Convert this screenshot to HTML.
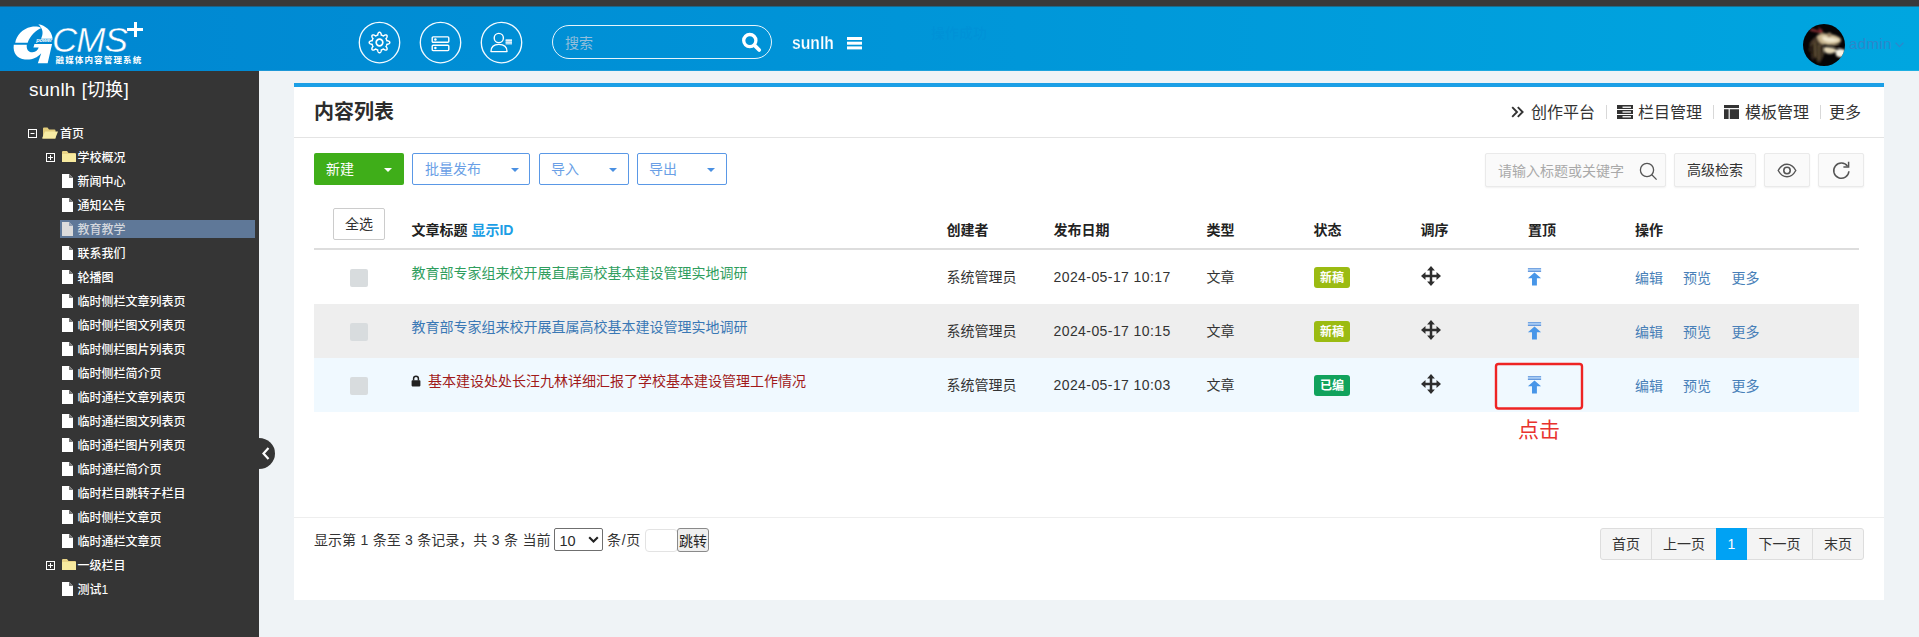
<!DOCTYPE html>
<html lang="zh-CN">
<head>
<meta charset="utf-8">
<title>内容列表</title>
<style>
*{box-sizing:border-box;margin:0;padding:0}
html,body{width:1919px;height:637px;overflow:hidden}
body{position:relative;background:#eff3f6;font-family:"Liberation Sans","Noto Sans CJK SC",sans-serif;font-size:14px;color:#333}
.abs{position:absolute}
.t{position:absolute;white-space:nowrap;line-height:1}
/* top */
#topbar{left:0;top:0;width:1919px;height:6px;background:#393939}
#header{left:0;top:6px;width:1919px;height:65px;background:linear-gradient(90deg,#0086d1 0%,#00a6e0 100%)}
.circ{width:41px;height:41px;border:1px solid #eaf7ff;border-radius:50%;box-shadow:0 0 .6px rgba(255,255,255,.7),inset 0 0 .6px rgba(255,255,255,.7)}
#hsearch{left:552px;top:25px;width:220px;height:34px;border:1px solid rgba(255,255,255,.9);border-radius:17px}
/* sidebar */
#side{left:0;top:71px;width:259px;height:566px;background:#353535}
.tree{color:#fff;font-size:12px;font-weight:500}
.tree .t{line-height:14px;margin-top:1px}
/* panel */
#panel{left:294px;top:83px;width:1590px;height:517px;background:#fff;border-top:4px solid #1b9fe6}
.btn-o{border:1px solid #5a98e6;border-radius:2px;background:#fff;height:32px}
.btn-o .t{color:#6a9fe6;font-size:14px;top:8px}
.caret{width:0;height:0;border-left:4px solid transparent;border-right:4px solid transparent;border-top:4px solid #4a90e2}
.tool{height:34px;top:153px;background:#fafafa;border:1px solid #eaeaea;border-radius:2px;box-shadow:0 1px 2px rgba(0,0,0,.06)}
.th{font-weight:bold;font-size:14px;color:#222}
.cb{width:18px;height:18px;background:#d8dcde;border-radius:2px}
.lnk{color:#487fb8;font-size:14px}
.badge{width:36px;height:21px;border-radius:3px;color:#fff;font-size:12px;font-weight:bold;text-align:center;line-height:22.5px}
.pg{top:528px;height:32px;background:#f4f4f4;border:1px solid #ddd;font-size:14px;color:#333;text-align:center;line-height:30px}
</style>
</head>
<body>
<div id="topbar" class="abs"></div>
<div id="header" class="abs"></div>
<div class="abs" style="left:0;top:6px;width:1919px;height:1px;background:rgba(57,57,57,.5)"></div>
<div class="abs" style="left:259px;top:70px;width:1660px;height:1px;background:rgba(239,243,246,.12)"></div>
<div class="t" style="left:931px;top:26px;font-size:14px;font-weight:bold;color:rgba(0,100,190,.07)">操作成功</div>
<div id="side" class="abs"></div>
<div id="panel" class="abs"></div>

<!-- logo -->
<svg class="abs" style="left:8px;top:16px" width="144" height="54" viewBox="0 0 1699 637">
  <g fill="#fff">
    <!-- upper-left crescent of G -->
    <path d="M85 316 C100 230 170 150 270 130 C320 120 360 125 392 142 C330 170 262 230 232 316 Z"/>
    <!-- flame swoosh -->
    <path d="M358 98 C440 112 515 170 527 268 L390 268 C420 210 415 150 358 98 Z"/>
    <!-- lower bowl + bar + stem -->
    <path d="M68 338 L222 338 C215 390 240 430 290 428 C330 425 352 400 362 372 L300 372 L312 330 L520 330 L468 556 L352 556 L392 440 C340 500 270 520 200 512 C110 500 55 440 68 338 Z"/>
  </g>
</svg>
<div class="t" style="left:36.3px;top:37.6px;font-size:5.6px;font-style:italic;font-weight:bold;color:#fff;letter-spacing:-.15px">power</div>
<div class="t" style="left:52px;top:22.3px;font-size:35px;font-style:italic;color:#fff;letter-spacing:-1px;font-family:'Liberation Sans',sans-serif;-webkit-text-stroke:.4px #0086d1">CMS</div>
<div class="abs" style="left:127px;top:28px;width:16px;height:3px;background:#fff"></div>
<div class="abs" style="left:133.5px;top:22px;width:3px;height:15px;background:#fff"></div>
<div class="t" style="left:55.5px;top:56px;font-size:8.5px;font-weight:bold;color:#fff;letter-spacing:1.15px">融媒体内容管理系统</div>

<!-- header circle icons -->
<svg class="abs" style="left:355px;top:18px" width="172" height="50" viewBox="0 0 172 50" fill="none" stroke="#f2faff" stroke-width="1.35"><circle cx="24.5" cy="24.6" r="20.2"/><circle cx="85.5" cy="24.6" r="20.2"/><circle cx="146.5" cy="24.6" r="20.2"/></svg>
<svg class="abs" style="left:367.4px;top:29.8px" width="25" height="25" viewBox="-12.5 -12.5 25 25" fill="none" stroke="#fff" stroke-width="1.45" stroke-linejoin="round">
  <circle r="3.3" stroke-width="1.7"/>
  <path d="M0.00 -10.30 L0.27 -10.26 L0.53 -10.16 L0.79 -9.98 L1.02 -9.74 L1.24 -9.44 L1.44 -9.07 L1.60 -8.65 L1.73 -8.13 L1.77 -7.39 L1.97 -7.34 L2.16 -7.29 L2.35 -7.23 L2.54 -7.16 L2.72 -7.10 L2.91 -7.02 L3.09 -6.94 L3.27 -6.86 L3.45 -6.77 L3.63 -6.68 L3.80 -6.58 L3.97 -6.48 L4.53 -6.98 L4.98 -7.25 L5.40 -7.43 L5.80 -7.55 L6.17 -7.61 L6.50 -7.62 L6.81 -7.56 L7.07 -7.45 L7.28 -7.28 L7.45 -7.07 L7.56 -6.81 L7.62 -6.50 L7.61 -6.17 L7.55 -5.80 L7.43 -5.40 L7.25 -4.98 L6.98 -4.53 L6.48 -3.97 L6.58 -3.80 L6.68 -3.63 L6.77 -3.45 L6.86 -3.27 L6.94 -3.09 L7.02 -2.91 L7.10 -2.72 L7.16 -2.54 L7.23 -2.35 L7.29 -2.16 L7.34 -1.97 L7.39 -1.77 L8.13 -1.73 L8.65 -1.60 L9.07 -1.44 L9.44 -1.24 L9.74 -1.02 L9.98 -0.79 L10.16 -0.53 L10.26 -0.27 L10.30 -0.00 L10.26 0.27 L10.16 0.53 L9.98 0.79 L9.74 1.02 L9.44 1.24 L9.07 1.44 L8.65 1.60 L8.13 1.73 L7.39 1.77 L7.34 1.97 L7.29 2.16 L7.23 2.35 L7.16 2.54 L7.10 2.72 L7.02 2.91 L6.94 3.09 L6.86 3.27 L6.77 3.45 L6.68 3.63 L6.58 3.80 L6.48 3.97 L6.98 4.53 L7.25 4.98 L7.43 5.40 L7.55 5.80 L7.61 6.17 L7.62 6.50 L7.56 6.81 L7.45 7.07 L7.28 7.28 L7.07 7.45 L6.81 7.56 L6.50 7.62 L6.17 7.61 L5.80 7.55 L5.40 7.43 L4.98 7.25 L4.53 6.98 L3.97 6.48 L3.80 6.58 L3.63 6.68 L3.45 6.77 L3.27 6.86 L3.09 6.94 L2.91 7.02 L2.72 7.10 L2.54 7.16 L2.35 7.23 L2.16 7.29 L1.97 7.34 L1.77 7.39 L1.73 8.13 L1.60 8.65 L1.44 9.07 L1.24 9.44 L1.02 9.74 L0.79 9.98 L0.53 10.16 L0.27 10.26 L0.00 10.30 L-0.27 10.26 L-0.53 10.16 L-0.79 9.98 L-1.02 9.74 L-1.24 9.44 L-1.44 9.07 L-1.60 8.65 L-1.73 8.13 L-1.77 7.39 L-1.97 7.34 L-2.16 7.29 L-2.35 7.23 L-2.54 7.16 L-2.72 7.10 L-2.91 7.02 L-3.09 6.94 L-3.27 6.86 L-3.45 6.77 L-3.63 6.68 L-3.80 6.58 L-3.97 6.48 L-4.53 6.98 L-4.98 7.25 L-5.40 7.43 L-5.80 7.55 L-6.17 7.61 L-6.50 7.62 L-6.81 7.56 L-7.07 7.45 L-7.28 7.28 L-7.45 7.07 L-7.56 6.81 L-7.62 6.50 L-7.61 6.17 L-7.55 5.80 L-7.43 5.40 L-7.25 4.98 L-6.98 4.53 L-6.48 3.97 L-6.58 3.80 L-6.68 3.63 L-6.77 3.45 L-6.86 3.27 L-6.94 3.09 L-7.02 2.91 L-7.10 2.72 L-7.16 2.54 L-7.23 2.35 L-7.29 2.16 L-7.34 1.97 L-7.39 1.77 L-8.13 1.73 L-8.65 1.60 L-9.07 1.44 L-9.44 1.24 L-9.74 1.02 L-9.98 0.79 L-10.16 0.53 L-10.26 0.27 L-10.30 0.00 L-10.26 -0.27 L-10.16 -0.53 L-9.98 -0.79 L-9.74 -1.02 L-9.44 -1.24 L-9.07 -1.44 L-8.65 -1.60 L-8.13 -1.73 L-7.39 -1.77 L-7.34 -1.97 L-7.29 -2.16 L-7.23 -2.35 L-7.16 -2.54 L-7.10 -2.72 L-7.02 -2.91 L-6.94 -3.09 L-6.86 -3.27 L-6.77 -3.45 L-6.68 -3.63 L-6.58 -3.80 L-6.48 -3.97 L-6.98 -4.53 L-7.25 -4.98 L-7.43 -5.40 L-7.55 -5.80 L-7.61 -6.17 L-7.62 -6.50 L-7.56 -6.81 L-7.45 -7.07 L-7.28 -7.28 L-7.07 -7.45 L-6.81 -7.56 L-6.50 -7.62 L-6.17 -7.61 L-5.80 -7.55 L-5.40 -7.43 L-4.98 -7.25 L-4.53 -6.98 L-3.97 -6.48 L-3.80 -6.58 L-3.63 -6.68 L-3.45 -6.77 L-3.27 -6.86 L-3.09 -6.94 L-2.91 -7.02 L-2.72 -7.10 L-2.54 -7.16 L-2.35 -7.23 L-2.16 -7.29 L-1.97 -7.34 L-1.77 -7.39 L-1.73 -8.13 L-1.60 -8.65 L-1.44 -9.07 L-1.24 -9.44 L-1.02 -9.74 L-0.79 -9.98 L-0.53 -10.16 L-0.27 -10.26 Z"/>
</svg>
<svg class="abs" style="left:430px;top:34px" width="22" height="19" viewBox="0 0 22 19" fill="none" stroke="#fff" stroke-width="1.4">
  <rect x="2.2" y="2.9" width="16.6" height="5.4" rx="1"/>
  <rect x="2.2" y="11.2" width="16.6" height="5.4" rx="1"/>
  <circle cx="5.4" cy="5.6" r="1.25" fill="#fff" stroke="none"/><circle cx="5.4" cy="13.9" r="1.25" fill="#fff" stroke="none"/>
</svg>
<svg class="abs" style="left:488px;top:30px" width="28" height="25" viewBox="0 0 28 25" fill="none" stroke="#fff" stroke-width="1.4">
  <circle cx="10.8" cy="8" r="4.6"/>
  <path d="M3 21.6 C3 16.5 6 14.4 10.8 14.4 C15.6 14.4 19 16.5 19 21.6 Z" stroke-linejoin="round"/>
  <rect x="17.6" y="9" width="6.4" height="5.6" fill="#9fd4f2" stroke="none"/>
  <path d="M17.6 10.6h6.4M17.6 12.8h6.4" stroke="#fff" stroke-width=".8"/>
</svg>

<!-- header search -->
<div id="hsearch" class="abs"></div>
<div class="t" style="left:565px;top:36px;font-size:14px;color:#92bedb">搜索</div>
<svg class="abs" style="left:741px;top:32px" width="22" height="22" viewBox="0 0 22 22" fill="none" stroke="#fff">
  <circle cx="8.8" cy="8.6" r="6.1" stroke-width="3.3"/>
  <path d="M13.6 13.4 L18.2 18" stroke-width="3.8" stroke-linecap="round"/>
</svg>
<div class="t" style="left:791.5px;top:33.5px;font-size:18.5px;font-weight:bold;color:#fff;transform:scaleX(.85);transform-origin:0 0;-webkit-text-stroke:.25px #0090d6">sunlh</div>
<div class="abs" style="left:847px;top:37px;width:14.5px;height:3px;background:#fff;box-shadow:0 4.7px 0 #fff,0 9.4px 0 #fff"></div>

<!-- avatar + admin -->
<svg class="abs" style="left:1803px;top:24px" width="42" height="42" viewBox="0 0 42 42">
  <defs><clipPath id="av"><circle cx="21" cy="21" r="21"/></clipPath><filter id="avb" x="-20%" y="-20%" width="140%" height="140%"><feGaussianBlur stdDeviation=".9"/></filter></defs>
  <g clip-path="url(#av)">
    <rect width="42" height="42" fill="#060405"/>
    <g filter="url(#avb)">
      <path d="M6 6.5 L13 8 L19 9.5 L20 7 L15 2.5 L16.5 7 L9 4.5 Z" fill="#8e3034"/>
      <path d="M7 19 C9 15 13 12 16 11 L22 14 L20 22 L21 30 L18 38 L14 39 L12 33 L9 36 L8 28 L6 27 Z" fill="#4a3b2a"/>
      <path d="M10 20 L11 36 M13.5 19 L14.5 39 M17.5 22 L17.5 38 M7.5 22 L8 30" stroke="#0d0806" stroke-width="1.5"/><path d="M12 19 L12.6 33 M16 21 L16 36" stroke="#85704f" stroke-width=".9"/>
      <path d="M14 12 C17 9 21 8.5 24 10 C26 8 28 8.5 28.5 10.5 C32 11 36 12.5 38 15 C38.5 17.5 37 19.5 34 20 C30 21.5 26 21.5 22 20.5 C18 20 15 17.5 14 12 Z" fill="#c9b791"/>
      <path d="M19 12.5 C23 12 30 13.5 36.5 15.5 C35 18 30 18.5 25 18 C21 17.5 19 15.5 19 12.5 Z" fill="#f1e7cc"/>
      <path d="M24 10.5 L27.5 9.5 L28.5 12.5 L25 13.5 Z" fill="#8a6f55"/>
      <path d="M21 23.5 C25 22.5 30 23.5 34 26 C32 29.5 27 30.5 23 29 C21 27.5 20.5 25.5 21 23.5 Z" fill="#e3d6b6"/>
      <path d="M32.5 27 C35 24.5 39 24.5 42 26 L42 32 C39 34 35 33.5 33 31.5 Z" fill="#f6f2e4"/>
      <path d="M27 20.5 L36 21 L38.5 24 L30 23 Z" fill="#1a0f0c"/>
    </g>
  </g>
</svg>
<div class="t" style="left:1849px;top:36px;font-size:15px;color:#2d87cb;letter-spacing:.35px">admin</div>
<svg class="abs" style="left:1895px;top:41.5px" width="9" height="6" viewBox="0 0 9 6" fill="none" stroke="#2d87cb" stroke-width="1.2"><path d="M.6 .8 L4.5 4.6 L8.4 .8"/></svg>

<!--HEADER-->

<svg width="0" height="0" style="position:absolute">
 <defs>
  <g id="i-file"><path d="M0 0 H7 L11 4 V14 H0 Z" fill="#fff"/><path d="M7 0 V4 H11 Z" fill="#777"/></g>
  <g id="i-files"><path d="M0 0 H7 L11 4 V14 H0 Z" fill="#dcdcdc"/><path d="M7 0 V4 H11 Z" fill="#8f9db3"/></g>
  <g id="i-fold"><path d="M0 2 Q0 1 1 1 H5 L6.5 3 H13 Q14 3 14 4 V12 H0 Z" fill="#e9d486"/><rect x="0" y="4" width="14" height="8" fill="#f7ea9f"/></g>
  <g id="i-open"><path d="M1 1.5 Q1 .5 2 .5 H5.5 L7 2.5 H12.5 Q13.5 2.5 13.5 3.5 V11.5 H1 Z" fill="#e3cd7c"/><path d="M3 4.5 H16 L13.2 11.5 H0 Z" fill="#f8eca4"/></g>
  <g id="i-plus"><rect x=".5" y=".5" width="8" height="8" fill="none" stroke="#fff"/><path d="M2 4.5 H7 M4.5 2 V7" stroke="#fff"/></g>
  <g id="i-minus"><rect x=".5" y=".5" width="8" height="8" fill="none" stroke="#fff"/><path d="M2.5 4.5 H6.5" stroke="#fff"/></g>
 </defs>
</svg>
<div class="t" style="left:29px;top:80px;font-size:19px;color:#fff;line-height:20px;letter-spacing:.25px">sunlh<span style="font-size:18px;letter-spacing:.3px;margin-left:6.1px">[切换]</span></div>
<div class="abs" style="left:60px;top:220px;width:195px;height:17.5px;background:#5f7898"></div>
<div class="tree">
<svg class="abs" style="left:28px;top:128.5px" width="9" height="9"><use href="#i-minus"/></svg>
<svg class="abs" style="left:42px;top:127px" width="17" height="12"><use href="#i-open"/></svg>
<div class="t" style="left:60px;top:126px">首页</div>
<svg class="abs" style="left:46px;top:152.5px" width="9" height="9"><use href="#i-plus"/></svg>
<svg class="abs" style="left:62px;top:150px" width="14" height="13"><use href="#i-fold"/></svg>
<div class="t" style="left:77.5px;top:150px">学校概况</div>
<svg class="abs" style="left:62px;top:174px" width="11" height="14"><use href="#i-file"/></svg>
<div class="t" style="left:77.5px;top:174px">新闻中心</div>
<svg class="abs" style="left:62px;top:198px" width="11" height="14"><use href="#i-file"/></svg>
<div class="t" style="left:77.5px;top:198px">通知公告</div>
<svg class="abs" style="left:62px;top:222px" width="11" height="14"><use href="#i-files"/></svg>
<div class="t" style="left:77.5px;top:222px;color:#d2d6dc">教育教学</div>
<svg class="abs" style="left:62px;top:246px" width="11" height="14"><use href="#i-file"/></svg>
<div class="t" style="left:77.5px;top:246px">联系我们</div>
<svg class="abs" style="left:62px;top:270px" width="11" height="14"><use href="#i-file"/></svg>
<div class="t" style="left:77.5px;top:270px">轮播图</div>
<svg class="abs" style="left:62px;top:294px" width="11" height="14"><use href="#i-file"/></svg>
<div class="t" style="left:77.5px;top:294px">临时侧栏文章列表页</div>
<svg class="abs" style="left:62px;top:318px" width="11" height="14"><use href="#i-file"/></svg>
<div class="t" style="left:77.5px;top:318px">临时侧栏图文列表页</div>
<svg class="abs" style="left:62px;top:342px" width="11" height="14"><use href="#i-file"/></svg>
<div class="t" style="left:77.5px;top:342px">临时侧栏图片列表页</div>
<svg class="abs" style="left:62px;top:366px" width="11" height="14"><use href="#i-file"/></svg>
<div class="t" style="left:77.5px;top:366px">临时侧栏简介页</div>
<svg class="abs" style="left:62px;top:390px" width="11" height="14"><use href="#i-file"/></svg>
<div class="t" style="left:77.5px;top:390px">临时通栏文章列表页</div>
<svg class="abs" style="left:62px;top:414px" width="11" height="14"><use href="#i-file"/></svg>
<div class="t" style="left:77.5px;top:414px">临时通栏图文列表页</div>
<svg class="abs" style="left:62px;top:438px" width="11" height="14"><use href="#i-file"/></svg>
<div class="t" style="left:77.5px;top:438px">临时通栏图片列表页</div>
<svg class="abs" style="left:62px;top:462px" width="11" height="14"><use href="#i-file"/></svg>
<div class="t" style="left:77.5px;top:462px">临时通栏简介页</div>
<svg class="abs" style="left:62px;top:486px" width="11" height="14"><use href="#i-file"/></svg>
<div class="t" style="left:77.5px;top:486px">临时栏目跳转子栏目</div>
<svg class="abs" style="left:62px;top:510px" width="11" height="14"><use href="#i-file"/></svg>
<div class="t" style="left:77.5px;top:510px">临时侧栏文章页</div>
<svg class="abs" style="left:62px;top:534px" width="11" height="14"><use href="#i-file"/></svg>
<div class="t" style="left:77.5px;top:534px">临时通栏文章页</div>
<svg class="abs" style="left:46px;top:560.5px" width="9" height="9"><use href="#i-plus"/></svg>
<svg class="abs" style="left:62px;top:558px" width="14" height="13"><use href="#i-fold"/></svg>
<div class="t" style="left:77.5px;top:558px">一级栏目</div>
<svg class="abs" style="left:62px;top:582px" width="11" height="14"><use href="#i-file"/></svg>
<div class="t" style="left:77.5px;top:582px">测试1</div>
</div>
<svg class="abs" style="left:259px;top:438px" width="17" height="31" viewBox="0 0 17 31"><path d="M0 0 A16 15.5 0 0 1 0 31 Z" fill="#353535"/><path d="M9.5 10 L4.5 15.5 L9.5 21" fill="none" stroke="#fff" stroke-width="2.2"/></svg>
<!--SIDEBAR-->

<div class="t" style="left:314px;top:101px;font-size:20px;font-weight:bold;color:#2c2c2c;line-height:22px">内容列表</div>
<div class="abs" style="left:294px;top:137px;width:1590px;height:1px;background:#e4e4e4"></div>

<!-- title-bar links -->
<svg class="abs" style="left:1511px;top:106px" width="13" height="12" viewBox="0 0 13 12" fill="none" stroke="#333" stroke-width="1.9"><path d="M1.2 1.2 L6 6 L1.2 10.8 M6.8 1.2 L11.6 6 L6.8 10.8"/></svg>
<div class="t" style="left:1531px;top:105px;font-size:16px;color:#333">创作平台</div>
<div class="abs" style="left:1606px;top:105px;width:1px;height:14px;background:#d8d8d8"></div>
<svg class="abs" style="left:1617px;top:104.5px" width="16" height="14" viewBox="0 0 16 14"><rect width="16" height="14" fill="#333"/><path d="M0 4.5 H16 M0 9.5 H16" stroke="#fff" stroke-width="1.2"/><path d="M5.5 2.2 H14 M5.5 7 H14 M5.5 11.8 H14" stroke="#e8e8e8" stroke-width="1.4"/></svg>
<div class="t" style="left:1638px;top:105px;font-size:16px;color:#333">栏目管理</div>
<div class="abs" style="left:1713px;top:105px;width:1px;height:14px;background:#d8d8d8"></div>
<svg class="abs" style="left:1724px;top:104.5px" width="15" height="14" viewBox="0 0 15 14"><rect width="15" height="14" fill="#333"/><path d="M0 3.6 H15 M5.2 3.6 V14" stroke="#f4f4f4" stroke-width="1.2"/></svg>
<div class="t" style="left:1745px;top:105px;font-size:16px;color:#333">模板管理</div>
<div class="abs" style="left:1820px;top:105px;width:1px;height:14px;background:#d8d8d8"></div>
<div class="t" style="left:1829px;top:105px;font-size:16px;color:#333">更多</div>

<!-- action buttons -->
<div class="abs" style="left:314px;top:153px;width:90px;height:32px;background:#3fae19;border-radius:2px">
  <div class="t" style="left:12px;top:9px;font-size:14px;color:#fff">新建</div>
  <div class="abs caret" style="left:70px;top:15px;border-top-color:#fff"></div>
</div>
<div class="abs btn-o" style="left:412px;top:153px;width:118px"><div class="t" style="left:12px">批量发布</div><div class="abs caret" style="left:98px;top:14px"></div></div>
<div class="abs btn-o" style="left:539px;top:153px;width:90px"><div class="t" style="left:11px">导入</div><div class="abs caret" style="left:69px;top:14px"></div></div>
<div class="abs btn-o" style="left:637px;top:153px;width:90px"><div class="t" style="left:11px">导出</div><div class="abs caret" style="left:69px;top:14px"></div></div>

<!-- right tools -->
<div class="abs tool" style="left:1485px;width:181px"></div>
<div class="t" style="left:1498px;top:164px;font-size:14px;color:#a9a9a9">请输入标题或关键字</div>
<svg class="abs" style="left:1639px;top:162px" width="19" height="19" viewBox="0 0 19 19" fill="none" stroke="#555" stroke-width="1.3"><circle cx="8" cy="8" r="6.6"/><path d="M12.8 12.8 L17.6 17.6"/></svg>
<div class="abs tool" style="left:1674px;width:82px"></div>
<div class="t" style="left:1687px;top:163px;font-size:14px;color:#333">高级检索</div>
<div class="abs tool" style="left:1764px;width:46px"></div>
<svg class="abs" style="left:1776px;top:162px" width="22" height="17" viewBox="0 0 22 17" fill="none" stroke="#555" stroke-width="1.4"><path d="M2.2 8.5 C4.8 3.8 8 2.3 11 2.3 C14 2.3 17.2 3.8 19.8 8.5 C17.2 13.2 14 14.7 11 14.7 C8 14.7 4.8 13.2 2.2 8.5 Z"/><circle cx="11" cy="8.5" r="3.2" stroke-width="1.6"/></svg>
<div class="abs tool" style="left:1818px;width:46px"></div>
<svg class="abs" style="left:1831px;top:160px" width="20" height="21" viewBox="0 0 20 21" fill="none" stroke="#555" stroke-width="1.5"><path d="M16.6 6.4 A7.6 7.6 0 1 0 17.9 11.2"/><path d="M17.6 1.8 V7 H12.4" stroke-linejoin="miter"/></svg>

<!-- table header -->
<div class="abs" style="left:333px;top:208px;width:52px;height:32px;border:1px solid #ccc;border-radius:2px;background:#fff"><div class="t" style="left:11px;top:8px;font-size:14px;color:#333">全选</div></div>
<div class="t th" style="left:411.5px;top:223px">文章标题 <span style="color:#1b9ee5">显示ID</span></div>
<div class="t th" style="left:946.5px;top:223px">创建者</div>
<div class="t th" style="left:1053.5px;top:223px">发布日期</div>
<div class="t th" style="left:1206.5px;top:223px">类型</div>
<div class="t th" style="left:1313.5px;top:223px">状态</div>
<div class="t th" style="left:1420.5px;top:223px">调序</div>
<div class="t th" style="left:1528px;top:223px">置顶</div>
<div class="t th" style="left:1635px;top:223px">操作</div>
<div class="abs" style="left:314px;top:248px;width:1545px;height:2px;background:#ddd"></div>
<div class="abs" style="left:314px;top:304px;width:1545px;height:54px;background:#eee"></div>
<div class="abs" style="left:314px;top:358px;width:1545px;height:54px;background:#f0f9ff"></div>
<div class="abs cb" style="left:350px;top:269px"></div>
<div class="t" style="left:411.5px;top:266px;font-size:14px;color:#2f9e5e">教育部专家组来校开展直属高校基本建设管理实地调研</div>
<div class="t" style="left:946.5px;top:270px;font-size:14px;color:#333">系统管理员</div>
<div class="t" style="left:1053.5px;top:270px;font-size:14px;color:#333;letter-spacing:.42px">2024-05-17 10:17</div>
<div class="t" style="left:1206.5px;top:270px;font-size:14px;color:#333">文章</div>
<div class="abs badge" style="left:1314px;top:267px;background:#9bbb12">新稿</div>
<svg class="abs" style="left:1421px;top:266px" width="20" height="20" viewBox="0 0 20 20"><path d="M10 0 L13.9 4.5 H11.25 V8.75 H15.5 V6.1 L20 10 L15.5 13.9 V11.25 H11.25 V15.5 H13.9 L10 20 L6.1 15.5 H8.75 V11.25 H4.5 V13.9 L0 10 L4.5 6.1 V8.75 H8.75 V4.5 H6.1 Z" fill="#2e2e2e"/></svg>
<svg class="abs" style="left:1527px;top:268px" width="15" height="18" viewBox="0 0 15 18"><rect x=".9" y=".3" width="13.2" height="3.3" fill="#cfe8ff"/><rect x=".9" y=".3" width="13.2" height="1" fill="#4a86d6"/><rect x=".9" y="2.6" width="13.2" height="1.2" fill="#4a86d6"/><path d="M7.5 4.6 L14.1 10.3 H9.9 V17.4 H5 V10.3 H.9 Z" fill="#4896e8"/></svg>
<div class="t lnk" style="left:1635px;top:271px">编辑</div>
<div class="t lnk" style="left:1683px;top:271px">预览</div>
<div class="t lnk" style="left:1731.5px;top:271px">更多</div>
<div class="abs cb" style="left:350px;top:323px"></div>
<div class="t" style="left:411.5px;top:320px;font-size:14px;color:#3a78b5">教育部专家组来校开展直属高校基本建设管理实地调研</div>
<div class="t" style="left:946.5px;top:324px;font-size:14px;color:#333">系统管理员</div>
<div class="t" style="left:1053.5px;top:324px;font-size:14px;color:#333;letter-spacing:.42px">2024-05-17 10:15</div>
<div class="t" style="left:1206.5px;top:324px;font-size:14px;color:#333">文章</div>
<div class="abs badge" style="left:1314px;top:321px;background:#9bbb12">新稿</div>
<svg class="abs" style="left:1421px;top:320px" width="20" height="20" viewBox="0 0 20 20"><path d="M10 0 L13.9 4.5 H11.25 V8.75 H15.5 V6.1 L20 10 L15.5 13.9 V11.25 H11.25 V15.5 H13.9 L10 20 L6.1 15.5 H8.75 V11.25 H4.5 V13.9 L0 10 L4.5 6.1 V8.75 H8.75 V4.5 H6.1 Z" fill="#2e2e2e"/></svg>
<svg class="abs" style="left:1527px;top:322px" width="15" height="18" viewBox="0 0 15 18"><rect x=".9" y=".3" width="13.2" height="3.3" fill="#cfe8ff"/><rect x=".9" y=".3" width="13.2" height="1" fill="#4a86d6"/><rect x=".9" y="2.6" width="13.2" height="1.2" fill="#4a86d6"/><path d="M7.5 4.6 L14.1 10.3 H9.9 V17.4 H5 V10.3 H.9 Z" fill="#4896e8"/></svg>
<div class="t lnk" style="left:1635px;top:325px">编辑</div>
<div class="t lnk" style="left:1683px;top:325px">预览</div>
<div class="t lnk" style="left:1731.5px;top:325px">更多</div>
<div class="abs cb" style="left:350px;top:377px"></div>
<svg class="abs" style="left:411px;top:375px" width="10" height="12" viewBox="0 0 10 12"><path d="M2.6 5.4 V3.6 A2.4 2.4 0 0 1 7.4 3.6 V5.4" fill="none" stroke="#222" stroke-width="1.5"/><rect x=".6" y="5.2" width="8.8" height="6.2" rx=".8" fill="#222"/></svg>
<div class="t" style="left:428px;top:374px;font-size:14px;color:#a01a1a">基本建设处处长汪九林详细汇报了学校基本建设管理工作情况</div>
<div class="t" style="left:946.5px;top:378px;font-size:14px;color:#333">系统管理员</div>
<div class="t" style="left:1053.5px;top:378px;font-size:14px;color:#333;letter-spacing:.42px">2024-05-17 10:03</div>
<div class="t" style="left:1206.5px;top:378px;font-size:14px;color:#333">文章</div>
<div class="abs badge" style="left:1314px;top:375px;background:#11a25c">已编</div>
<svg class="abs" style="left:1421px;top:374px" width="20" height="20" viewBox="0 0 20 20"><path d="M10 0 L13.9 4.5 H11.25 V8.75 H15.5 V6.1 L20 10 L15.5 13.9 V11.25 H11.25 V15.5 H13.9 L10 20 L6.1 15.5 H8.75 V11.25 H4.5 V13.9 L0 10 L4.5 6.1 V8.75 H8.75 V4.5 H6.1 Z" fill="#2e2e2e"/></svg>
<svg class="abs" style="left:1527px;top:376px" width="15" height="18" viewBox="0 0 15 18"><rect x=".9" y=".3" width="13.2" height="3.3" fill="#cfe8ff"/><rect x=".9" y=".3" width="13.2" height="1" fill="#4a86d6"/><rect x=".9" y="2.6" width="13.2" height="1.2" fill="#4a86d6"/><path d="M7.5 4.6 L14.1 10.3 H9.9 V17.4 H5 V10.3 H.9 Z" fill="#4896e8"/></svg>
<div class="t lnk" style="left:1635px;top:379px">编辑</div>
<div class="t lnk" style="left:1683px;top:379px">预览</div>
<div class="t lnk" style="left:1731.5px;top:379px">更多</div>

<!-- annotation -->
<svg class="abs" style="left:1492px;top:360px" width="94" height="52" viewBox="0 0 94 52"><rect x="4" y="4" width="86" height="44.5" rx="2.5" fill="none" stroke="#ee2424" stroke-width="2.4"/></svg>
<div class="t" style="left:1518px;top:419px;font-size:21px;color:#e8322d">点击</div>

<!-- footer -->
<div class="abs" style="left:294px;top:517px;width:1590px;height:1px;background:#eee"></div>
<div class="t" style="left:314px;top:533px;font-size:14px;color:#333;word-spacing:.55px">显示第 1 条至 3 条记录，共 3 条 当前</div>
<div class="abs" style="left:554px;top:528px;width:49px;height:23px;border:1px solid #6f6f6f;border-radius:2px;background:#fff"><div class="t" style="left:4.5px;top:4.6px;font-size:14.5px;color:#2a2a2a">10</div>
<svg class="abs" style="left:33px;top:7px" width="11" height="8" viewBox="0 0 11 8" fill="none" stroke="#222" stroke-width="2.1"><path d="M1.2 1.3 L5.5 5.6 L9.8 1.3"/></svg></div>
<div class="t" style="left:607px;top:533px;font-size:14px;color:#333;letter-spacing:.7px">条/页</div>
<div class="abs" style="left:645px;top:529px;width:33px;height:23px;border:1px solid #e3e3e3;border-radius:4px;background:#fff"></div>
<div class="abs" style="left:677px;top:528px;width:32px;height:24px;border:1px solid #8a8a8a;border-radius:3px;background:#efefef"><div class="t" style="left:1px;top:4.6px;font-size:14px;color:#222">跳转</div></div>

<div class="abs pg" style="left:1600px;width:52px;border-radius:3px 0 0 3px">首页</div>
<div class="abs pg" style="left:1651px;width:66px">上一页</div>
<div class="abs pg" style="left:1716px;width:31px;background:#00a2f4;border-color:#00a2f4;color:#fff">1</div>
<div class="abs pg" style="left:1747px;width:66px;border-left:0">下一页</div>
<div class="abs pg" style="left:1812px;width:52px;border-radius:0 3px 3px 0">末页</div>

<!--PANEL-->
</body>
</html>
